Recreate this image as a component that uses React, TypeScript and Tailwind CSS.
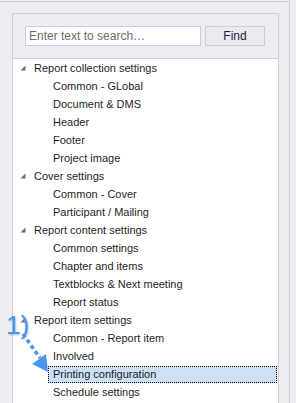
const tree = [
  { label: 'Report collection settings', children: ['Common - GLobal', 'Document & DMS', 'Header', 'Footer', 'Project image'] },
  { label: 'Cover settings', children: ['Common - Cover', 'Participant / Mailing'] },
  { label: 'Report content settings', children: ['Common settings', 'Chapter and items', 'Textblocks & Next meeting', 'Report status'] },
  { label: 'Report item settings', children: ['Common - Report item', 'Involved', 'Printing configuration', 'Schedule settings'] },
]

const selected = 'Printing configuration'

function Caret() {
  return (
    <svg width="6" height="6" viewBox="0 0 6 6" className="shrink-0">
      <polygon points="5.5,0.5 5.5,5.5 0.5,5.5" fill="#6b6b6b" />
    </svg>
  )
}

export default function App() {
  return (
    <div
      className="relative w-[296px] h-[403px] overflow-hidden bg-[#eeeef2] text-[11px] text-[#1e1e1e]"
      style={{ fontFamily: '"Liberation Sans", Arial, sans-serif' }}
    >
      {/* outer frame */}
      <div className="mt-px w-[290px] h-[420px] border-t border-r border-[#cfcfd9] pl-3 pt-[11px]">
        {/* inner panel */}
        <div className="w-[267px] h-[420px] border border-[#cfcfd9] flex flex-col">
          {/* search bar */}
          <div className="h-[45px] border-b border-[#cfcfd9] flex items-start gap-1 pl-3 pt-3">
            <div className="w-[176px] h-5 bg-white border border-[#cccedb] flex items-center px-[3px] text-[#6d6d6d] text-[12px]">
              Enter text to search…
            </div>
            <div className="w-[60px] h-5 border border-[#cccedb] bg-[#ecebf0] flex items-center justify-center text-[12px] text-[#1e1e3c]">
              Find
            </div>
          </div>

          {/* tree */}
          <div className="flex-1 bg-white">
            {tree.map(group => (
              <div key={group.label}>
                <div className="h-[18px] flex items-center pl-[7px]">
                  <Caret />
                  <span className="pl-[8px] whitespace-nowrap">{group.label}</span>
                </div>
                {group.children.map(c => (
                  <div key={c} className="h-[18px] flex items-center pl-[35px] pr-px">
                    <div
                      className={
                        c === selected
                          ? 'flex-1 h-[17px] flex items-center pl-1 bg-[#cce0f6] border border-dotted border-black whitespace-nowrap'
                          : 'flex-1 h-[17px] flex items-center pl-1 border border-transparent whitespace-nowrap'
                      }
                    >
                      {c}
                    </div>
                  </div>
                ))}
              </div>
            ))}
          </div>
        </div>
      </div>

      {/* annotation */}
      <div className="absolute left-[6px] top-[312px] text-[26px] leading-none text-[#4a96ec] [text-shadow:1px_1px_2px_rgba(40,90,160,0.35)]">
        1)
      </div>
      <svg className="absolute left-0 top-0" width="296" height="403" viewBox="0 0 296 403">
        <line x1="23" y1="334" x2="40" y2="358" stroke="#4a96ec" strokeWidth="3.5" strokeDasharray="4 3" />
        <polygon points="48,372 32,364 46,354" fill="#4a96ec" />
      </svg>
    </div>
  )
}
